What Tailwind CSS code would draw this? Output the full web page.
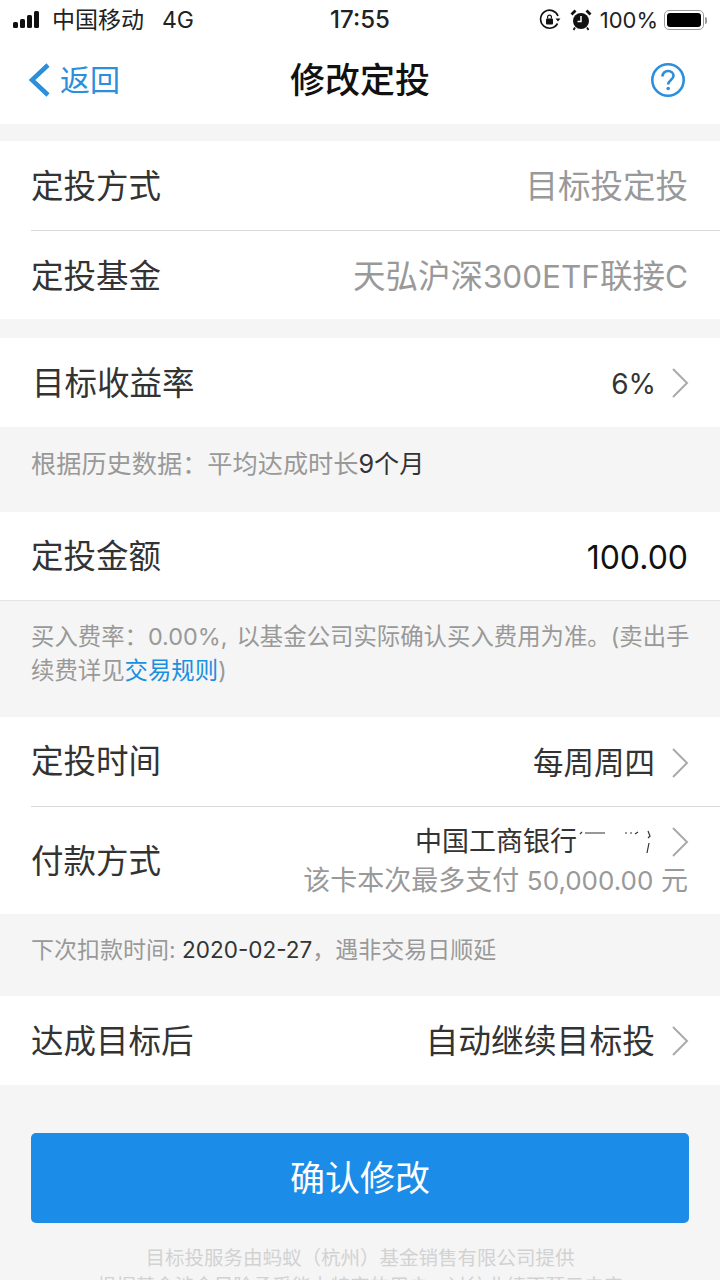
<!DOCTYPE html>
<html lang="zh">
<head>
  <meta charset="UTF-8">
  <title>修改定投</title>
  <script src="https://cdn.jsdelivr.net/npm/@tailwindcss/browser@4"></script>
</head>
<body class="bg-[#f5f5f5] font-['Inter','Noto_Sans_CJK_SC',sans-serif] text-[#222]">
  <div class="w-[720px] h-[1280px] overflow-hidden">
    <!-- Status bar -->
    <div class="bg-white h-[40px] flex items-center relative px-[13px] text-[23px] text-[#222]">
      <svg width="32" height="20" viewBox="0 0 32 20" class="mr-[8px]" fill="#111">
        <rect x="0" y="12" width="5" height="6" rx="1.5"/>
        <rect x="7" y="9" width="5" height="9" rx="1.5"/>
        <rect x="14" y="5" width="5" height="13" rx="1.5"/>
        <rect x="21" y="1" width="5" height="17" rx="1.5"/>
      </svg>
      <span class="-ml-[1px]">中国移动</span>
      <span class="ml-[18px] text-[23px]">4G</span>
      <span class="absolute left-0 w-[720px] text-center text-[24px] font-medium">17:55</span>
      <div class="ml-auto flex items-center relative">
        <svg width="22" height="22" viewBox="0 0 22 22" fill="none" class="mr-[9px]">
          <path d="M18.5 14.5A9 9 0 1 1 19 7" stroke="#111" stroke-width="1.6"/>
          <path d="M16.5 9.500h5l-2.500 3z" fill="#111"/>
          <rect x="7" y="9.500" width="7" height="6" rx="1" fill="#111"/>
          <path d="M8.600 9.500V8a1.900 1.900 0 0 1 3.800 0v1.500" stroke="#111" stroke-width="1.200"/>
        </svg>
        <svg width="22" height="22" viewBox="0 0 22 22" class="mr-[8px]">
          <circle cx="11" cy="12" r="8" fill="#111"/>
          <path d="M1.500 5.500 5.500 1.500M16.500 1.500l4 4" stroke="#111" stroke-width="2.800" fill="none"/>
          <path d="M11 7v5.500H7.500" stroke="#fff" stroke-width="1.500" fill="none"/>
          <path d="M5 18.500 3.500 21M17 18.500l1.500 2.500" stroke="#111" stroke-width="1.800" fill="none"/>
        </svg>
        <span class="text-[22px]">100%</span>
        <div class="ml-[6px] w-[40px] h-[20px] rounded-[5px] border border-[#999] p-[2px]">
          <div class="w-full h-full rounded-[3px] bg-black"></div>
        </div>
        <div class="ml-[1px] w-[2px] h-[7px] rounded-r bg-[#999]"></div>
      </div>
    </div>

    <!-- Nav -->
    <div class="bg-white h-[84px] flex items-center relative pl-[27px] pr-[34px]">
      <svg width="24" height="34" viewBox="0 0 24 34" fill="none" class="mb-[4px]">
        <path d="M21 2 5 17l16 15" stroke="#2b8fdc" stroke-width="4.500"/>
      </svg>
      <span class="ml-[9px] mb-[4px] text-[30px] text-[#2b8fdc]">返回</span>
      <span class="absolute left-0 w-[720px] text-center mb-[4px] text-[35px] font-medium text-[#111]">修改定投</span>
      <svg width="36" height="36" viewBox="0 0 36 36" fill="none" class="ml-auto mb-[4px]">
        <circle cx="18" cy="18" r="15.700" stroke="#2b8fdc" stroke-width="2.600"/>
        <path d="M12.500 14.500c0-3.400 2.400-5.500 5.600-5.500 3.200 0 5.400 2 5.400 4.800 0 4.200-5.300 4.200-5.300 8.700" stroke="#2b8fdc" stroke-width="2.600"/>
        <circle cx="18.200" cy="26.500" r="1.800" fill="#2b8fdc"/>
      </svg>
    </div>

    <!-- 定投方式 -->
    <div class="mt-[17px] bg-white">
      <div class="h-[90px] ml-[31px] pr-[32px] pt-[4px] flex items-center justify-between border-b border-[#d9d9d9] text-[32.500px]">
        <span class="text-[#333]">定投方式</span>
        <span class="text-[#999]">目标投定投</span>
      </div>
      <div class="h-[88px] ml-[31px] pr-[32px] pt-[4px] flex items-center justify-between text-[32.500px]">
        <span class="text-[#333]">定投基金</span>
        <span class="text-[#999]">天弘沪深<span class="text-[31.500px]">300ETF</span>联接<span class="text-[31.500px]">C</span></span>
      </div>
    </div>

    <!-- 目标收益率 -->
    <div class="mt-[19px] h-[89px] bg-white pl-[32px] pr-[31px] pt-[3px] flex items-center justify-between text-[32.500px]">
      <span class="text-[#333]">目标收益率</span>
      <span class="flex items-center gap-[15px]">
        <span class="text-[#333] text-[28px]">6%</span>
        <svg width="18" height="30" viewBox="0 0 18 30" fill="none" class="-mt-[3px]"><path d="M2 1l14 14L2 29" stroke="#aaa" stroke-width="2"/></svg>
      </span>
    </div>
    <div class="h-[85px] pl-[31px] pb-[10px] flex items-center text-[25.200px] text-[#999]">
      根据历史数据：平均达成时长<span class="text-[#333]">9个月</span>
    </div>

    <!-- 定投金额 -->
    <div class="h-[89px] bg-white pl-[31px] pr-[32px] pt-[3px] flex items-center justify-between border-b border-[#e5e5e5]">
      <span class="text-[32.500px] text-[#333]">定投金额</span>
      <span class="text-[32px] text-[#111]">100.00</span>
    </div>
    <div class="h-[116px] pl-[31px] pt-[19px] text-[23.400px] leading-[34px] text-[#999] whitespace-nowrap">
      买入费率：0.00%,<span class="ml-[9px]">以基金公司实际确认买入费用为准。(卖出手</span><br>续费详见<span class="text-[#1b8fe0]">交易规则</span>)
    </div>

    <!-- 定投时间 / 付款方式 -->
    <div class="bg-white">
      <div class="h-[90px] ml-[31px] pr-[31px] pt-[2px] flex items-center justify-between border-b border-[#d9d9d9]">
        <span class="text-[32.500px] text-[#333]">定投时间</span>
        <span class="flex items-center gap-[16px]">
          <span class="text-[30.500px] text-[#333]">每周周四</span>
          <svg width="18" height="30" viewBox="0 0 18 30" fill="none"><path d="M2 1l14 14L2 29" stroke="#aaa" stroke-width="2"/></svg>
        </span>
      </div>
      <div class="h-[107px] ml-[31px] pr-[32px] pt-[3px] flex items-center justify-between">
        <span class="text-[32.500px] text-[#333]">付款方式</span>
        <div class="flex flex-col items-end">
          <span class="flex items-center gap-[16px] -mr-[1px]">
            <span class="flex items-center text-[27px] leading-[38px] text-[#333]">中国工商银行
              <!-- card number is masked out in the screenshot -->
              <svg width="78" height="26" viewBox="0 0 78 26" fill="none" stroke="#333" stroke-width="1.200">
                <path d="M3 5 5 3M8 4h20M48 4h2M53 4h2M58 5l3-2M71 2l2 5-2 2M72 14l-2 10"/>
              </svg>
            </span>
            <svg width="18" height="30" viewBox="0 0 18 30" fill="none"><path d="M2 1l14 14L2 29" stroke="#aaa" stroke-width="2"/></svg>
          </span>
          <span class="text-[27px] leading-[40px] text-[#999]">该卡本次最多支付 <span class="text-[26px]">50,000.00</span> 元</span>
        </div>
      </div>
    </div>
    <div class="h-[82px] pl-[31px] pb-[10px] flex items-center text-[23px] text-[#999] whitespace-pre">下次扣款时间: <span class="text-[#333] text-[22.500px]">2020-02-27</span>，遇非交易日顺延</div>

    <!-- 达成目标后 -->
    <div class="h-[89px] bg-white pl-[31px] pr-[31px] pt-[3px] flex items-center justify-between">
      <span class="text-[32.500px] text-[#333]">达成目标后</span>
      <span class="flex items-center gap-[16px]">
        <span class="text-[32.800px] text-[#333]">自动继续目标投</span>
        <svg width="18" height="30" viewBox="0 0 18 30" fill="none" class="-mt-[3px]"><path d="M2 1l14 14L2 29" stroke="#aaa" stroke-width="2"/></svg>
      </span>
    </div>

    <!-- Confirm -->
    <div class="mt-[48px] mx-[31px] h-[90px] rounded-[5px] bg-[#1b8ce8] flex items-center justify-center text-[35px] text-white">确认修改</div>
    <div class="mt-[21px] text-center text-[19.500px] leading-[28px] text-[#d2d2d2]">
      <p>目标投服务由蚂蚁（杭州）基金销售有限公司提供</p>
      <p>根据基金涉金风险承受能力特定的用户，过往业绩不预示未来</p>
    </div>
  </div>
</body>
</html>
